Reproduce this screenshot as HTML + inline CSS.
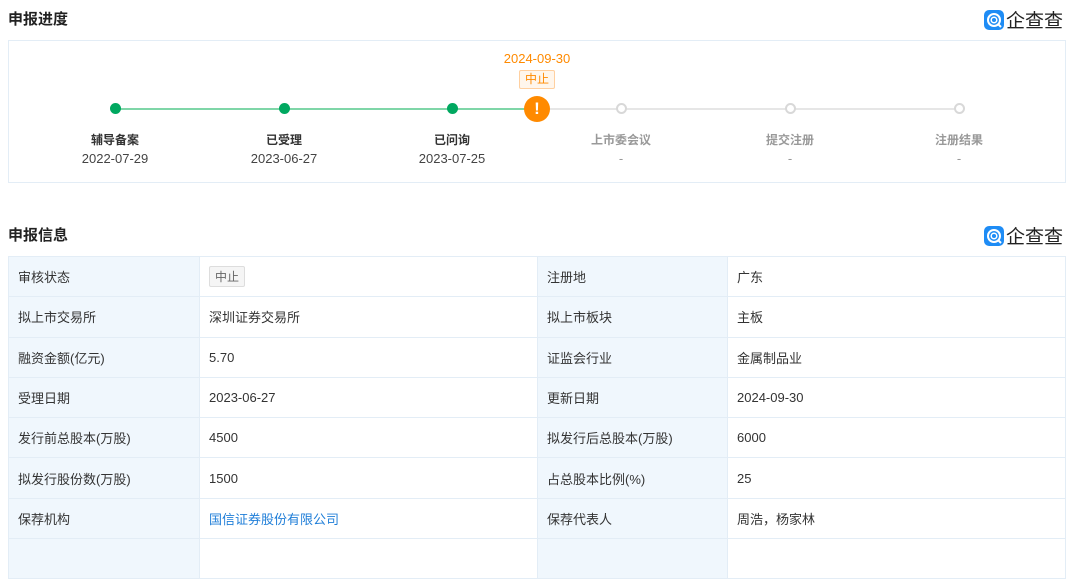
<!DOCTYPE html>
<html><head><meta charset="utf-8"><style>
*{margin:0;padding:0;box-sizing:border-box}
body{width:1080px;height:541px;background:#fff;font-family:"Liberation Sans","Noto Sans CJK SC",sans-serif;position:relative;overflow:hidden;color:#333}
.abs{position:absolute}
.h{font-size:15px;font-weight:bold;color:#222}
.logo{position:absolute;display:flex;align-items:center;font-size:19px;color:#222;letter-spacing:0px}
.logo .ic{width:20px;height:20px;border-radius:5px;background:#1e8cf5;margin-right:2px;position:relative}
.box{position:absolute;left:8px;top:40px;width:1058px;height:143px;border:1px solid #e3edf6}
.dot{position:absolute;width:11px;height:11px;border-radius:50%;background:#00a860;top:103px}
.odot{position:absolute;width:11px;height:11px;border-radius:50%;background:#fff;border:2px solid #d8d8d8;top:103px}
.lbl{position:absolute;top:131px;width:140px;text-align:center;font-size:12px;font-weight:bold;color:#333}
.dt{position:absolute;top:151px;width:140px;text-align:center;font-size:13px;color:#444}
.g{color:#999}
table{position:absolute;left:8px;top:256px;border-collapse:collapse;font-size:13px;color:#333}
td{border:1px solid #e3edf6;height:40.3px;padding:0 9px}
td.k{background:#f0f7fd;width:191px}
td.v{width:338px}
td.k2{background:#f0f7fd;width:190px}
td.v2{width:338px}
.tag{display:inline-block;border:1px solid #ddd;background:#f5f5f5;color:#666;font-size:12px;padding:1px 5px;border-radius:2px}
</style></head><body>
<div class="abs h" style="left:8px;top:8px">申报进度</div>
<div class="logo" style="left:984px;top:6px"><div class="ic"><svg width="20" height="20" viewBox="0 0 20 20"><circle cx="10" cy="10" r="6" fill="none" stroke="#fff" stroke-width="2"/><circle cx="10" cy="10" r="2.8" fill="none" stroke="#fff" stroke-width="1.5"/><path d="M14 14l3 3" stroke="#fff" stroke-width="2"/></svg></div>企查查</div>
<div class="box"></div>
<div class="abs" style="left:115px;top:108px;width:422px;height:2px;background:#7fd6a8"></div>
<div class="abs" style="left:537px;top:108px;width:422px;height:2px;background:#e6e6e6"></div>
<div class="dot" style="left:110px"></div>
<div class="dot" style="left:279px"></div>
<div class="dot" style="left:447px"></div>
<div class="abs" style="left:524px;top:96px;width:26px;height:26px;border-radius:50%;background:#ff8a00;color:#fff;font-weight:bold;font-size:17px;text-align:center;line-height:26px">!</div>
<div class="odot" style="left:616px"></div>
<div class="odot" style="left:785px"></div>
<div class="odot" style="left:954px"></div>
<div class="abs" style="left:487px;top:51px;width:100px;text-align:center;font-size:13px;color:#ff8a00">2024-09-30</div>
<div class="abs" style="left:519px;top:70px;width:36px;height:19px;border:1px solid #ffd0a0;background:#fff6ec;color:#ff8a00;font-size:12px;text-align:center;line-height:17px;border-radius:2px">中止</div>
<div class="lbl" style="left:45px">辅导备案</div><div class="dt" style="left:45px">2022-07-29</div>
<div class="lbl" style="left:214px">已受理</div><div class="dt" style="left:214px">2023-06-27</div>
<div class="lbl" style="left:382px">已问询</div><div class="dt" style="left:382px">2023-07-25</div>
<div class="lbl g" style="left:551px">上市委会议</div><div class="dt g" style="left:551px">-</div>
<div class="lbl g" style="left:720px">提交注册</div><div class="dt g" style="left:720px">-</div>
<div class="lbl g" style="left:889px">注册结果</div><div class="dt g" style="left:889px">-</div>
<div class="abs h" style="left:8px;top:224px">申报信息</div>
<div class="logo" style="left:984px;top:222px"><div class="ic"><svg width="20" height="20" viewBox="0 0 20 20"><circle cx="10" cy="10" r="6" fill="none" stroke="#fff" stroke-width="2"/><circle cx="10" cy="10" r="2.8" fill="none" stroke="#fff" stroke-width="1.5"/><path d="M14 14l3 3" stroke="#fff" stroke-width="2"/></svg></div>企查查</div>
<table>
<tr><td class="k">审核状态</td><td class="v"><span class="tag">中止</span></td><td class="k2">注册地</td><td class="v2">广东</td></tr>
<tr><td class="k">拟上市交易所</td><td class="v">深圳证券交易所</td><td class="k2">拟上市板块</td><td class="v2">主板</td></tr>
<tr><td class="k">融资金额(亿元)</td><td class="v">5.70</td><td class="k2">证监会行业</td><td class="v2">金属制品业</td></tr>
<tr><td class="k">受理日期</td><td class="v">2023-06-27</td><td class="k2">更新日期</td><td class="v2">2024-09-30</td></tr>
<tr><td class="k">发行前总股本(万股)</td><td class="v">4500</td><td class="k2">拟发行后总股本(万股)</td><td class="v2">6000</td></tr>
<tr><td class="k">拟发行股份数(万股)</td><td class="v">1500</td><td class="k2">占总股本比例(%)</td><td class="v2">25</td></tr>
<tr><td class="k">保荐机构</td><td class="v" style="color:#1f7ed8">国信证券股份有限公司</td><td class="k2">保荐代表人</td><td class="v2">周浩，杨家林</td></tr>
<tr><td class="k"></td><td class="v"></td><td class="k2"></td><td class="v2"></td></tr>
</table>
</body></html>
